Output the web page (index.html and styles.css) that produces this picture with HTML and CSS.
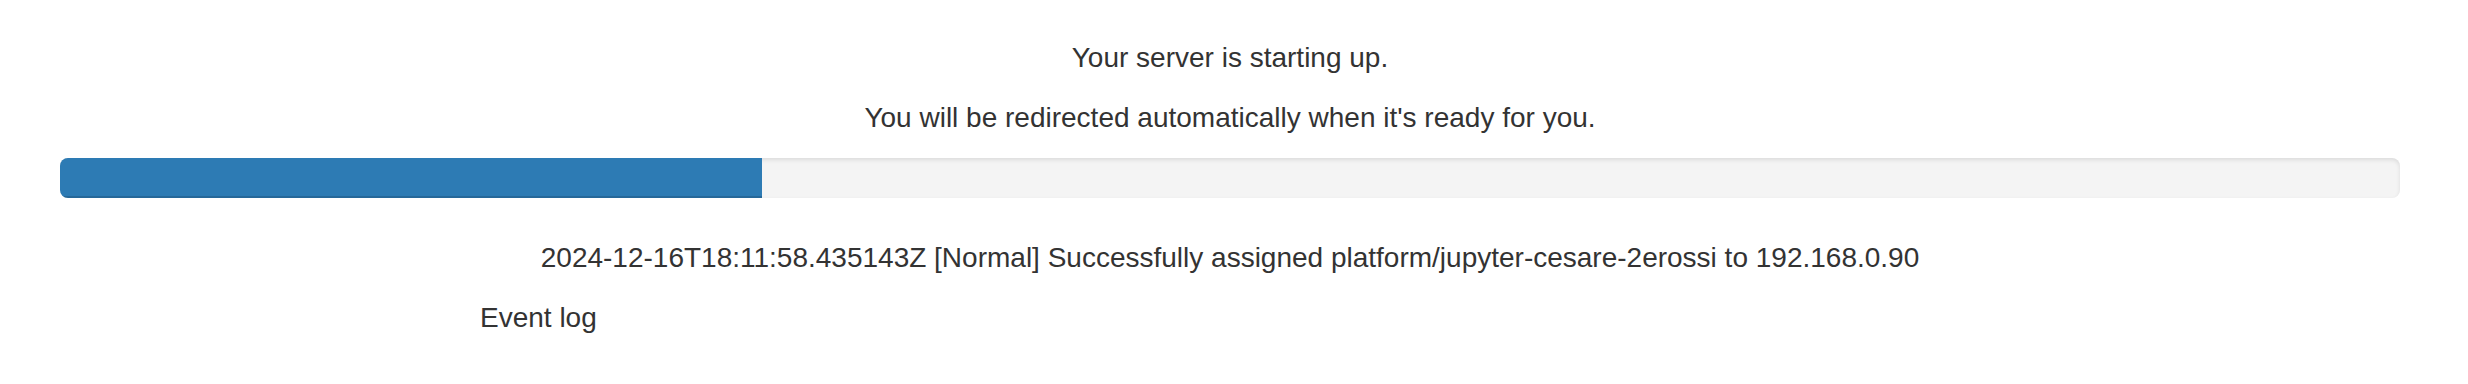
FILE: index.html
```html
<!DOCTYPE html>
<html lang="en">
<head>
<meta charset="utf-8">
<title>Server starting</title>
<link rel="stylesheet" href="styles.css">
</head>
<body>
<div class="container">
  <div class="row">
    <div class="text-center">
      <p>Your server is starting up.</p>
      <p>You will be redirected automatically when it's ready for you.</p>
      <div class="progress">
        <div class="progress-bar" style="width: 30%;"></div>
      </div>
      <p class="progress-message">2024-12-16T18:11:58.435143Z [Normal] Successfully assigned platform/jupyter-cesare-2erossi to 192.168.0.90</p>
    </div>
  </div>
  <div class="row">
    <div class="col-offset">
      <details class="progress-details">
        <summary>Event log</summary>
      </details>
    </div>
  </div>
</div>
</body>
</html>
```

FILE: styles.css
```css
* { box-sizing: border-box; }
html, body { margin: 0; padding: 0; background: #fff; }
body {
  font-family: "Liberation Sans", Arial, Helvetica, sans-serif;
  font-size: 28px;
  line-height: 40px;
  color: #333;
  padding-right: 8px;
}
.container {
  width: 2340px;
  margin: 0 auto;
  padding: 38px 30px 0;
}
.row {
  margin: 0 -30px;
}
.text-center { text-align: center; }
p { margin: 0 0 20px; }
.progress {
  height: 40px;
  margin-bottom: 40px;
  background: #f4f4f4;
  border-radius: 8px;
  box-shadow: inset 0 2px 4px rgba(0,0,0,0.1);
  overflow: hidden;
  display: flex;
}
.progress-bar {
  height: 100%;
  background: #2d7bb4;
  box-shadow: inset 0 -2px 0 rgba(0,0,0,0.15);
}
.col-offset {
  margin-left: 390px;
  width: 1560px;
  padding: 0 30px;
}
.progress-details summary {
  display: block;
  list-style: none;
  cursor: pointer;
}
.progress-details summary::-webkit-details-marker { display: none; }
```
